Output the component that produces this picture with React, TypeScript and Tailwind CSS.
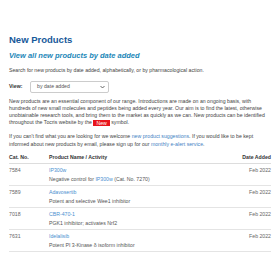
import React from "react";

const rows = [
  { cat: "7584", name: "IP300w", desc: <>Negative control for <a className="text-[#4a8fd0]">IP300w</a> (Cat. No. 7270)</> },
  { cat: "7589", name: "Adavosertib", desc: <>Potent and selective Wee1 inhibitor</> },
  { cat: "7018", name: "CBR-470-1", desc: <>PGK1 inhibitor; activates Nrf2</> },
  { cat: "7631", name: "Idelalisib", desc: <>Potent PI 3-Kinase δ isoform inhibitor</> },
];

export default function App() {
  return (
    <div className="w-[280px] h-[280px] bg-white overflow-hidden font-['Liberation_Sans',Arial,sans-serif] text-[#444]">
      <div className="px-[9px] pt-[34px]">
        <h1 className="text-[9.5px] leading-[12px] font-bold text-[#17599a]">New Products</h1>
        <h2 className="mt-[5px] text-[7.5px] leading-[10px] font-bold italic text-[#1c87b8]">View all new products by date added</h2>
        <p className="mt-[6px] text-[5.2px] leading-[7px]">Search for new products by date added, alphabetically, or by pharmacological action.</p>
        <div className="mt-[7px] flex items-center">
          <span className="w-[21px] text-[5.2px] font-bold text-[#333]">View:</span>
          <div className="w-[79px] h-[12px] border border-[#ccc] rounded-[2px] flex items-center justify-between pl-[6px] pr-[3px] text-[5.2px] text-[#555]">
            <span>by date added</span>
            <svg width="5" height="4" viewBox="0 0 10 6" className="text-[#444]">
              <path d="M1 1 L5 5 L9 1" fill="none" stroke="currentColor" strokeWidth="1.6" />
            </svg>
          </div>
        </div>
        <p className="mt-[5px] text-[5.2px] leading-[7px]">
          New products are an essential component of our range. Introductions are made on an ongoing basis, with hundreds of new small molecules and peptides being added every year. Our aim is to find the latest, otherwise unobtainable research tools, and bring them to the market as quickly as we can. New products can be identified throughout the Tocris website by the{" "}
          <span className="inline-block bg-[#e8141c] text-white px-[3px] leading-[6px] align-middle">New</span> symbol.
        </p>
        <p className="mt-[6px] text-[5.2px] leading-[8px]">
          If you can't find what you are looking for we welcome <a className="text-[#3f7fc4]">new product suggestions</a>. If you would like to be kept informed about new products by email, please sign up for our <a className="text-[#3f7fc4]">monthly e-alert service</a>.
        </p>
        <div className="mt-[4px] text-[5.2px]">
          <div className="flex h-[12px] items-center font-bold text-[#333] border-b border-[#ddd]">
            <span className="w-[40px]">Cat. No.</span>
            <span className="flex-1">Product Name / Activity</span>
            <span>Date Added</span>
          </div>
          {rows.map((r) => (
            <div key={r.cat} className="flex pt-[3px] pb-[2px] border-b border-[#e4e4e4] text-[#666]">
              <span className="w-[40px] leading-[7px]">{r.cat}</span>
              <div className="flex-1">
                <div className="leading-[7px] text-[#4a8fd0]">{r.name}</div>
                <div className="mt-[2px] leading-[7px] text-[#555]">{r.desc}</div>
              </div>
              <span className="leading-[7px]">Feb 2022</span>
            </div>
          ))}
        </div>
      </div>
    </div>
  );
}
